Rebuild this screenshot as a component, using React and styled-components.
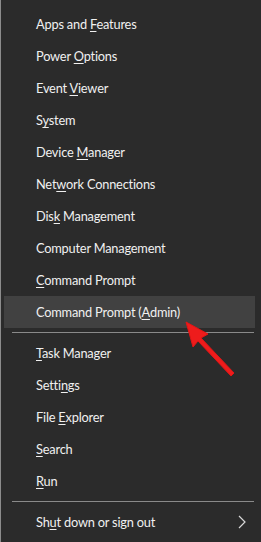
import React from "react";
import styled, { createGlobalStyle } from "styled-components";

const Global = createGlobalStyle`
  html, body {
    margin: 0;
    padding: 0;
    background: #2b2b2b;
  }
`;

const Menu = styled.div`
  position: relative;
  box-sizing: border-box;
  width: 261px;
  height: 542px;
  background: #2b2b2b;
  border-left: 1px solid #8c8c8c;
  padding: 8px 0 4px 3px;
  display: flex;
  flex-direction: column;
  font-family: Lato, "Noto Sans", sans-serif;
  font-size: 12.8px;
  letter-spacing: -0.2px;
  color: #f0f0f0;
`;

const Item = styled.div`
  height: 32px;
  margin-right: 6px;
  padding-left: 32px;
  padding-right: 10px;
  display: flex;
  align-items: center;
  justify-content: space-between;
  background: ${(p) => (p.$active ? "#414141" : "transparent")};

  u {
    text-decoration-thickness: 1px;
    text-underline-offset: 2px;
  }
`;

const Separator = styled.div`
  height: 9px;
  display: flex;
  align-items: center;
  padding: 0 7px 0 8px;

  &::after {
    content: "";
    flex: 1;
    height: 1px;
    background: #8a8a8a;
  }
`;

const Chevron = styled.svg`
  width: 10px;
  height: 14px;
  margin-right: -2px;
`;

const Arrow = styled.svg`
  position: absolute;
  left: 180px;
  top: 316px;
  width: 58px;
  height: 64px;
  pointer-events: none;
`;

const label = (text, key) => {
  if (key == null) return text;
  return (
    <>
      {text.slice(0, key)}
      <u>{text[key]}</u>
      {text.slice(key + 1)}
    </>
  );
};

const groups = [
  [
    ["Apps and Features", 9],
    ["Power Options", 6],
    ["Event Viewer", 6],
    ["System", 1],
    ["Device Manager", 7],
    ["Network Connections", 3],
    ["Disk Management", 3],
    ["Computer Management", null],
    ["Command Prompt", 0],
    ["Command Prompt (Admin)", 16, true],
  ],
  [
    ["Task Manager", 0],
    ["Settings", 5],
    ["File Explorer", 5],
    ["Search", 0],
    ["Run", 0],
  ],
];

export default function App() {
  return (
    <>
      <Global />
      <Menu>
        {groups.map((g, gi) => (
          <React.Fragment key={gi}>
            {g.map(([text, key, active]) => (
              <Item key={text} $active={active}>
                <span>{label(text, key)}</span>
              </Item>
            ))}
            <Separator />
          </React.Fragment>
        ))}
        <Item>
          <span>{label("Shut down or sign out", 2)}</span>
          <Chevron viewBox="0 0 10 14">
            <path d="M2 1 L8 7 L2 13" fill="none" stroke="#d8d8d8" strokeWidth="1.2" />
          </Chevron>
        </Item>
        <Arrow viewBox="0 0 58 64">
          <path
            d="M5 6 L12 31 L17 25 L50 60 L53 57 L20 22 L27 18 Z"
            fill="#ee1c1c"
            stroke="#e21515"
            strokeWidth="1"
            strokeLinejoin="round"
          />
        </Arrow>
      </Menu>
    </>
  );
}
